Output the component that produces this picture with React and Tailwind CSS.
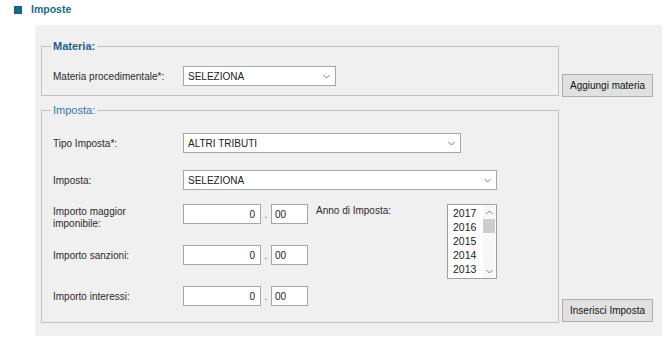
import { memo } from 'react';

function Chevron({ up = false, className = '' }) {
  return (
    <svg width="7" height="5" viewBox="0 0 7 5" className={className}>
      <path
        d={up ? 'M0.5 4L3.5 1L6.5 4' : 'M0.5 1L3.5 4L6.5 1'}
        fill="none"
        stroke="#7a7a7a"
        strokeWidth="1"
      />
    </svg>
  );
}

function FakeSelect({ value, width }) {
  return (
    <div
      className={`flex h-[20px] items-center justify-between border border-[#a6a6a6] bg-white pl-[4px] pr-[5px] text-[10px] text-[#222] ${width}`}
    >
      <span>{value}</span>
      <Chevron />
    </div>
  );
}

function Amount() {
  return (
    <div className="flex items-center">
      <div className="flex h-[20px] w-[78px] items-center justify-end border border-[#a6a6a6] bg-white pr-[5px] text-[10px] text-[#222]">
        0
      </div>
      <span className="w-[10px] text-center text-[10px] text-[#555]">.</span>
      <div className="flex h-[20px] w-[37px] items-center border border-[#a6a6a6] bg-white pl-[3px] text-[10px] text-[#222]">
        00
      </div>
    </div>
  );
}

function YearList() {
  const years = ['2017', '2016', '2015', '2014', '2013'];
  return (
    <div className="flex h-[75px] w-[50px] border border-[#a0a0a0] bg-white">
      <div className="flex-1 pl-[5px] pt-[1px] text-[10.5px] leading-[14px] text-[#222]">
        {years.map((y) => (
          <div key={y}>{y}</div>
        ))}
      </div>
      <div className="mr-[1px] flex w-[12px] flex-col items-center bg-[#f7f7f7]">
        <div className="flex h-[14px] items-center">
          <Chevron up />
        </div>
        <div className="h-[14px] w-full bg-[#cdcdcd]" />
        <div className="flex-1" />
        <div className="flex h-[14px] items-center">
          <Chevron />
        </div>
      </div>
    </div>
  );
}

function Button({ children, className = '' }) {
  return (
    <div
      className={`flex h-[23px] w-[91px] items-center justify-center border border-[#adadad] bg-[#e1e1e1] text-[10px] text-[#111] ${className}`}
    >
      {children}
    </div>
  );
}

function App() {
  return (
    <div className="h-[350px] w-[671px] bg-white font-['Liberation_Sans',Arial,sans-serif] text-[10px] text-[#2a2a2a]">
      <div className="flex h-[20px] items-center gap-[9px] pl-[14px]">
        <span className="h-[8px] w-[8px] bg-[#12688a]" />
        <span className="text-[10.5px] font-bold text-[#1a6a8e]">Imposte</span>
      </div>

      <div className="ml-[35px] mt-[5px] h-[311px] w-[627px] bg-[#f0f0f0] pl-[6px] pt-[14px]">
        {/* Materia */}
        <div className="flex items-end">
          <fieldset className="h-[57px] w-[518px] border border-[#c2c2c2] pl-[9px]">
            <legend className="px-[2px] text-[11px] font-bold leading-[14px] text-[#1d5f8c]">
              Materia:
            </legend>
            <div className="mt-[13px] flex items-center pl-[2px]">
              <span className="w-[130px]">Materia procedimentale*:</span>
              <FakeSelect value="SELEZIONA" width="w-[153px]" />
            </div>
          </fieldset>
          <Button className="mb-[-1px] ml-[3px]">Aggiungi materia</Button>
        </div>

        {/* Imposta */}
        <div className="mt-[7px] flex items-end">
          <fieldset className="h-[220px] w-[518px] border border-[#c2c2c2] pl-[9px]">
            <legend className="px-[2px] text-[11px] leading-[14px] text-[#2b78ad]">
              Imposta:
            </legend>
            <div className="pl-[2px]">
              <div className="mt-[16px] flex items-center">
                <span className="w-[130px]">Tipo Imposta*:</span>
                <FakeSelect value="ALTRI TRIBUTI" width="w-[278px]" />
              </div>
              <div className="mt-[17px] flex items-center">
                <span className="w-[130px]">Imposta:</span>
                <FakeSelect value="SELEZIONA" width="w-[314px]" />
              </div>

              <div className="mt-[14px] flex items-start">
                <div className="flex flex-col gap-[21px]">
                  <div className="flex h-[20px] items-start">
                    <span className="w-[130px] pt-[2px] leading-[12px]">
                      Importo maggior
                      <br />
                      imponibile:
                    </span>
                    <Amount />
                  </div>
                  <div className="flex h-[20px] items-center">
                    <span className="w-[130px]">Importo sanzioni:</span>
                    <Amount />
                  </div>
                  <div className="flex h-[20px] items-center">
                    <span className="w-[130px]">Importo interessi:</span>
                    <Amount />
                  </div>
                </div>
                <span className="ml-[8px] w-[131px] pt-[1px] leading-[12px]">Anno di Imposta:</span>
                <YearList />
              </div>
            </div>
          </fieldset>
          <Button className="mb-[1px] ml-[3px]">Inserisci Imposta</Button>
        </div>
      </div>
    </div>
  );
}

export default memo(App);
